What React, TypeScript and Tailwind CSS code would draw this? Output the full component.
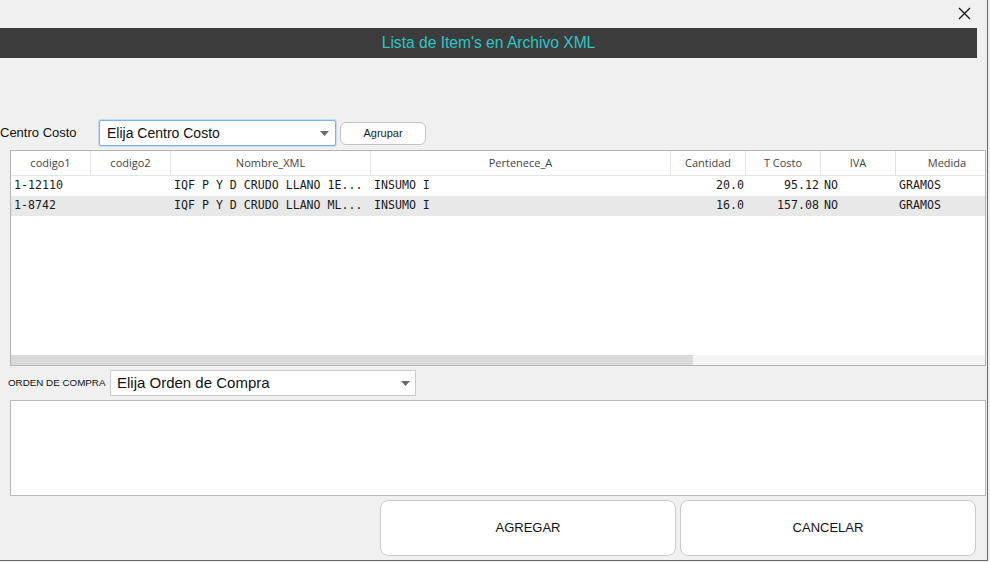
import React from "react";

const cols = [
  { name: "codigo1", w: 80 },
  { name: "codigo2", w: 80 },
  { name: "Nombre_XML", w: 200 },
  { name: "Pertenece_A", w: 300 },
  { name: "Cantidad", w: 75 },
  { name: "T Costo", w: 75 },
  { name: "IVA", w: 75 },
  { name: "Medida", w: 102 },
];

const rows = [
  ["1-12110", "", "IQF P Y D CRUDO LLANO 1E...", "INSUMO I", "20.0", "95.12", "NO", "GRAMOS"],
  ["1-8742", "", "IQF P Y D CRUDO LLANO ML...", "INSUMO I", "16.0", "157.08", "NO", "GRAMOS"],
];

const Arrow = () => (
  <svg width="9" height="5" viewBox="0 0 9 5">
    <path d="M0 0 L9 0 L4.5 5 Z" fill="#6b6b6b" />
  </svg>
);

export default function App() {
  const sans = { fontFamily: '"Liberation Sans", Arial, sans-serif' };
  return (
    <div className="w-[990px] h-[562px] bg-[#f0f0f0] overflow-hidden" style={sans}>
      <div className="w-[988px] h-[561px] border-r border-b border-[#6a6a6a] flex flex-col">
        <div className="h-[28px] flex justify-end pr-[16px] pt-[7px]">
          <svg width="13" height="13" viewBox="0 0 13 13">
            <path d="M1 1 L12 12 M12 1 L1 12" stroke="#111" strokeWidth="1.3" />
          </svg>
        </div>
        <div className="h-[30px] w-[977px] bg-[#3c3c3c] flex items-center justify-center text-[15.6px] text-[#2ec6c6]">
          Lista de Item's en Archivo XML
        </div>
        <div className="h-[62px]" />
        <div className="h-[26px] flex items-center">
          <div className="w-[99px] text-[13px] text-[#111]">Centro Costo</div>
          <div className="w-[237px] h-[26px] bg-white border border-[#7eb3e6] rounded-[2px] shadow-[0_0_0_1px_#c6dcf3] flex items-center justify-between pl-[7px] pr-[6px] text-[14px] text-[#111]">
            <span>Elija Centro Costo</span>
            <Arrow />
          </div>
          <div className="ml-[4px] w-[86px] h-[23px] bg-white border border-[#c4c4c4] rounded-[6px] flex items-center justify-center text-[11px] text-[#222]">
            Agrupar
          </div>
        </div>
        <div className="h-[4px]" />
        <div className="ml-[10px] w-[976px] h-[216px] border border-[#b4b4b4] bg-white flex flex-col overflow-hidden">
          <div className="h-[25px] flex border-b border-[#e4e4e4] shrink-0" style={{ fontFamily: '"Open Sans", sans-serif' }}>
            {cols.map((c, i) => (
              <div
                key={c.name}
                className={`shrink-0 flex items-center justify-center text-[11px] text-[#444] ${i < cols.length - 1 ? "border-r border-[#e4e4e4]" : ""}`}
                style={{ width: c.w }}
              >
                {c.name}
              </div>
            ))}
          </div>
          {rows.map((r, ri) => (
            <div
              key={ri}
              className={`h-[20px] flex shrink-0 text-[11.6px] text-[#1a1a1a] ${ri === 1 ? "bg-[#e8e8e8]" : "bg-white"}`}
              style={{ fontFamily: '"DejaVu Sans Mono", monospace' }}
            >
              {r.map((v, ci) => {
                const right = ci === 4 || ci === 5;
                return (
                  <div
                    key={ci}
                    className={`shrink-0 flex items-center whitespace-nowrap overflow-hidden ${right ? "justify-end pr-[2px]" : "pl-[3px]"}`}
                    style={{ width: cols[ci].w }}
                  >
                    {v}
                  </div>
                );
              })}
            </div>
          ))}
          <div className="flex-1" />
          <div className="h-[10px] bg-[#f4f4f4] flex shrink-0">
            <div className="w-[682px] h-full bg-[#dadada]" />
          </div>
        </div>
        <div className="h-[4px]" />
        <div className="h-[26px] flex items-center">
          <div className="w-[110px] pl-[8px] text-[9.8px] text-[#111]">ORDEN DE COMPRA</div>
          <div className="w-[306px] h-[26px] bg-white border border-[#cacaca] flex items-center justify-between pl-[6px] pr-[5px] text-[15px] text-[#111]">
            <span>Elija Orden de Compra</span>
            <Arrow />
          </div>
        </div>
        <div className="h-[4px]" />
        <div className="ml-[10px] w-[976px] h-[96px] bg-white border border-[#b9b9b9]" />
        <div className="h-[4px]" />
        <div className="flex ml-[380px] gap-[4px]">
          <div className="w-[296px] h-[56px] bg-white border border-[#cbcbcb] rounded-[8px] flex items-center justify-center text-[13px] text-[#111]">
            AGREGAR
          </div>
          <div className="w-[296px] h-[56px] bg-white border border-[#cbcbcb] rounded-[8px] flex items-center justify-center text-[13px] text-[#111]">
            CANCELAR
          </div>
        </div>
      </div>
    </div>
  );
}
